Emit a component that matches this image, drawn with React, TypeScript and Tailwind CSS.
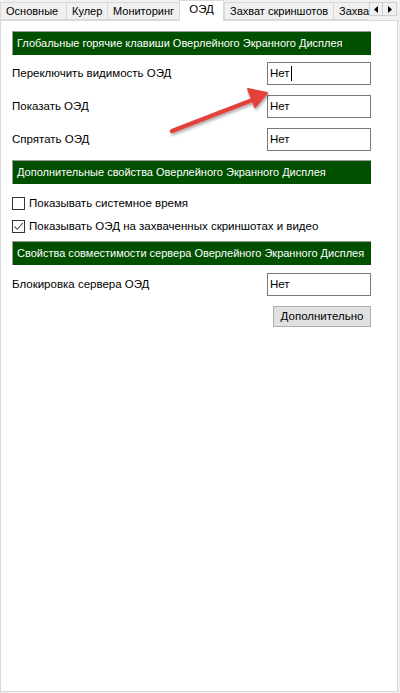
import React from 'react'

const font = { fontFamily: '"Liberation Sans", Arial, sans-serif' }

const tabs = [
  { label: 'Основные', w: 'w-[66px]' },
  { label: 'Кулер', w: 'w-[41px]' },
  { label: 'Мониторинг', w: 'w-[72px]' },
  { label: 'ОЭД', w: 'w-[45px]', active: true },
  { label: 'Захват скриншотов', w: 'w-[109px]' },
  { label: 'Захва', w: 'w-[36px]' },
]

function Header({ children, className = '' }: { children: React.ReactNode; className?: string }) {
  return (
    <div className={`h-[24px] w-[359px] bg-[#005000] border-t border-l border-[#9a9a9a] flex items-center pl-[4px] text-white text-[11px] whitespace-nowrap overflow-hidden ${className}`}>
      {children}
    </div>
  )
}

function HotkeyRow({ label, cursor, className = '' }: { label: string; cursor?: boolean; className?: string }) {
  return (
    <div className={`flex items-center w-[359px] h-[23px] ${className}`}>
      <span className="flex-1 text-[11.5px] text-black whitespace-nowrap">{label}</span>
      <div className="w-[104px] h-[23px] border border-[#7a7a7a] bg-white flex items-center pl-[2px] text-[11.5px] text-black">
        Нет
        {cursor && <span className="inline-block w-px h-[15px] bg-black ml-[1px]" />}
      </div>
    </div>
  )
}

function Check({ label, checked, className = '' }: { label: string; checked?: boolean; className?: string }) {
  return (
    <div className={`flex items-center gap-[4px] h-[13px] ${className}`}>
      <div className="w-[13px] h-[13px] border border-[#333333] bg-white flex items-center justify-center shrink-0">
        {checked && (
          <svg width="11" height="11" viewBox="0 0 11 11">
            <path d="M1.5 5.5 L4.2 8.3 L9.8 2.2" fill="none" stroke="#555" strokeWidth="1.1" />
          </svg>
        )}
      </div>
      <span className="text-[11.5px] text-black whitespace-nowrap">{label}</span>
    </div>
  )
}

export default function App() {
  return (
    <div className="w-[400px] h-[693px] bg-[#f0f0f0] overflow-hidden" style={font}>
      {/* вкладки */}
      <div className="flex items-start h-[20px]">
        {tabs.map((t) =>
          t.active ? (
            <div
              key={t.label}
              className={`${t.w} h-[21px] relative z-10 bg-white border border-b-0 border-[#d9d9d9] flex items-center justify-center text-[11.5px] text-black pb-[2px] shrink-0`}
            >
              {t.label}
            </div>
          ) : (
            <div
              key={t.label}
              className={`${t.w} mt-[2px] h-[18px] bg-[#f0f0f0] border border-r-0 border-[#d9d9d9] flex items-center text-[11px] text-black overflow-hidden whitespace-nowrap pl-[5px] shrink-0`}
            >
              {t.label}
            </div>
          )
        )}
        <div className="flex mt-[2px] shrink-0">
          <div className="w-[14px] h-[14px] bg-[#f0f0f0] border border-[#cfcfcf] flex items-center justify-center">
            <svg width="4" height="7" viewBox="0 0 4 7"><path d="M4 0 L0 3.5 L4 7 Z" fill="#000" /></svg>
          </div>
          <div className="w-[14px] h-[14px] bg-[#f0f0f0] border border-l-0 border-[#cfcfcf] flex items-center justify-center">
            <svg width="4" height="7" viewBox="0 0 4 7"><path d="M0 0 L4 3.5 L0 7 Z" fill="#000" /></svg>
          </div>
        </div>
      </div>

      {/* панель */}
      <div className="relative w-[398px] h-[672px] bg-white border border-[#d9d9d9] pl-[11px] pt-[10px]">
        <Header>Глобальные горячие клавиши Оверлейного Экранного Дисплея</Header>
        <HotkeyRow label="Переключить видимость ОЭД" cursor className="mt-[7px]" />
        <HotkeyRow label="Показать ОЭД" className="mt-[10px]" />
        <HotkeyRow label="Спрятать ОЭД" className="mt-[10px]" />

        <Header className="mt-[9px]">Дополнительные свойства Оверлейного Экранного Дисплея</Header>
        <Check label="Показывать системное время" className="mt-[13px]" />
        <Check label="Показывать ОЭД на захваченных скриншотах и видео" checked className="mt-[10px]" />

        <Header className="mt-[8px]">Свойства совместимости сервера Оверлейного Экранного Дисплея</Header>
        <HotkeyRow label="Блокировка сервера ОЭД" className="mt-[8px]" />
        <div className="w-[359px] flex justify-end mt-[10px]">
          <button className="w-[98px] h-[21px] bg-[#e1e1e1] border border-[#adadad] text-[11.5px] text-black">
            Дополнительно
          </button>
        </div>

        {/* стрелка-указатель */}
        <svg className="absolute left-[150px] top-[40px] pointer-events-none" width="130" height="80" viewBox="0 0 130 80">
          <defs>
            <filter id="sh" x="-20%" y="-20%" width="140%" height="140%">
              <feDropShadow dx="1" dy="2" stdDeviation="1.5" floodColor="#000" floodOpacity="0.35" />
            </filter>
          </defs>
          <g filter="url(#sh)">
            <line x1="21" y1="70" x2="104" y2="38" stroke="#e2433b" strokeWidth="4.5" strokeLinecap="round" />
            <path d="M116 32 L97 28 L104 46 Z" fill="#e2433b" stroke="#e2433b" strokeWidth="2" strokeLinejoin="round" />
          </g>
        </svg>
      </div>
    </div>
  )
}
